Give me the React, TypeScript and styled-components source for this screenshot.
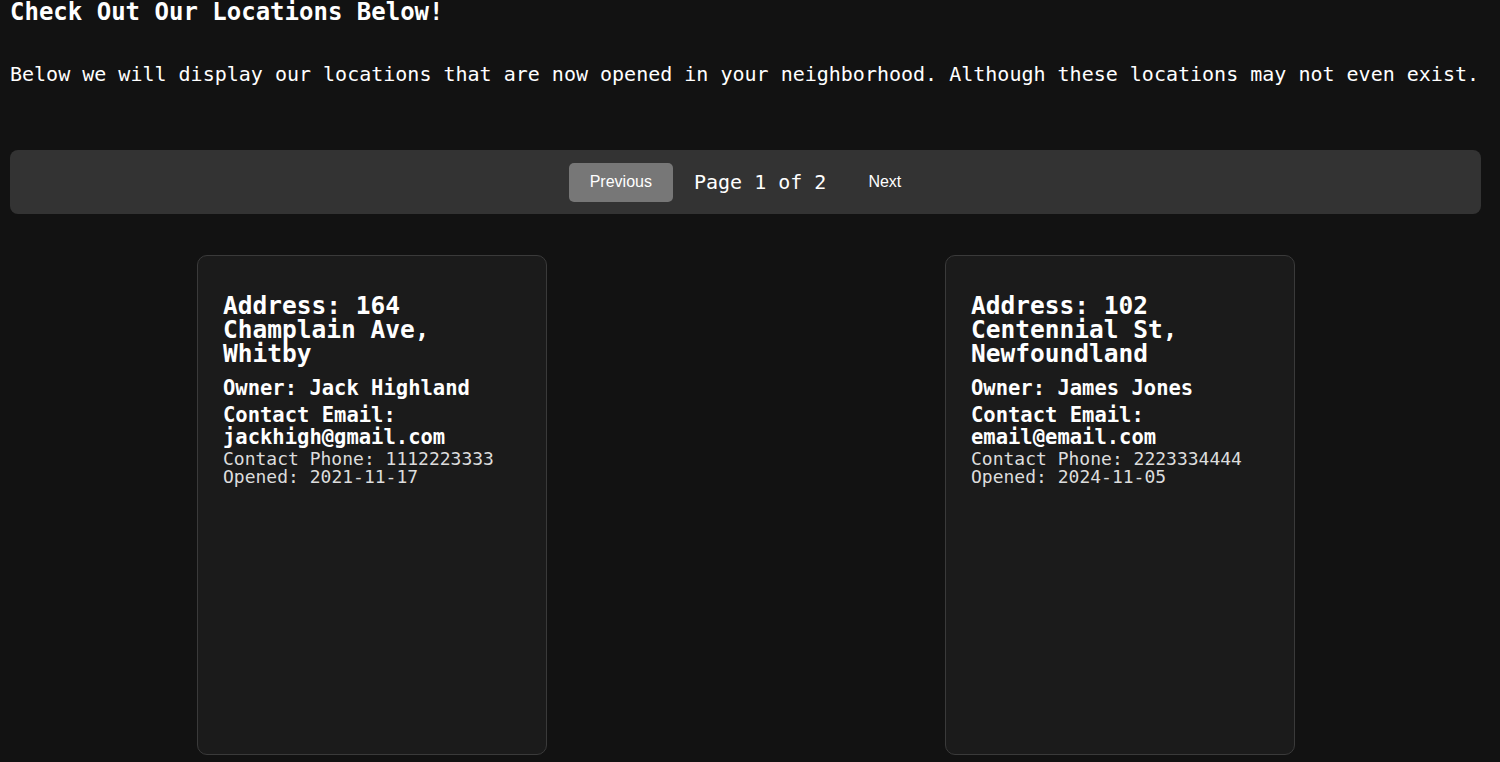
import React from "react";
import styled, { createGlobalStyle } from "styled-components";

const GlobalStyle = createGlobalStyle`
  html, body {
    margin: 0;
    padding: 0;
    background: #121212;
    color: #fff;
    font-family: "DejaVu Sans Mono", "Liberation Mono", monospace;
  }
`;

type Location = {
  address: string;
  owner: string;
  email: string;
  phone: string;
  opened: string;
};

const locations: Location[] = [
  {
    address: "164 Champlain Ave, Whitby",
    owner: "Jack Highland",
    email: "jackhigh@gmail.com",
    phone: "1112223333",
    opened: "2021-11-17",
  },
  {
    address: "102 Centennial St, Newfoundland",
    owner: "James Jones",
    email: "email@email.com",
    phone: "2223334444",
    opened: "2024-11-05",
  },
];

export default function App() {
  return (
    <>
      <GlobalStyle />
      <Page>
        <Intro>
          <Title>Check Out Our Locations Below!</Title>
          <Lead>
            Below we will display our locations that are now opened in your
            neighborhood. Although these locations may not even exist.
          </Lead>
        </Intro>

        <Pager>
          <PagerButton $active>Previous</PagerButton>
          <PageLabel>Page 1 of 2</PageLabel>
          <PagerButton>Next</PagerButton>
        </Pager>

        <CardList>
          {locations.map((loc) => (
            <Card key={loc.address}>
              <Address>Address: {loc.address}</Address>
              <Detail>Owner: {loc.owner}</Detail>
              <Detail>Contact Email: {loc.email}</Detail>
              <Meta>
                Contact Phone: {loc.phone}
                <br />
                Opened: {loc.opened}
              </Meta>
            </Card>
          ))}
        </CardList>
      </Page>
    </>
  );
}

const Page = styled.main`
  display: flex;
  flex-direction: column;
  min-height: 100vh;
`;

const Intro = styled.header`
  padding: 0 10px;
`;

const Title = styled.h1`
  margin: 0;
  font-size: 24px;
  line-height: 24px;
  font-weight: bold;
  color: #fff;
`;

const Lead = styled.p`
  margin: 38px 0 0;
  font-size: 20px;
  line-height: 24px;
  color: #fff;
  white-space: nowrap;
`;

const Pager = styled.nav`
  display: flex;
  align-items: center;
  justify-content: center;
  gap: 21px;
  margin: 64px 19px 0 10px;
  height: 64px;
  background: #333;
  border-radius: 8px;
`;

const PagerButton = styled.button<{ $active?: boolean }>`
  height: 39px;
  padding: 0 21px;
  border: none;
  border-radius: 5px;
  background: ${(p) => (p.$active ? "#777" : "transparent")};
  color: #fff;
  font-family: "Liberation Sans", Arial, sans-serif;
  font-size: 16px;
  cursor: pointer;
`;

const PageLabel = styled.span`
  font-size: 20px;
  color: #fff;
`;

const CardList = styled.section`
  display: flex;
  justify-content: space-around;
  margin: 41px 0 0 -2px;
  padding-right: 6px;
`;

const Card = styled.article`
  box-sizing: border-box;
  width: 350px;
  height: 500px;
  padding: 38px 25px;
  background: #1b1b1b;
  border: 1px solid #3a3a3a;
  border-radius: 10px;
`;

const Address = styled.h2`
  margin: 0 0 11px;
  font-size: 24.5px;
  line-height: 24px;
  font-weight: bold;
  color: #fff;
`;

const Detail = styled.h3`
  margin: 0 0 5px;
  font-size: 20.5px;
  line-height: 22px;
  font-weight: bold;
  color: #fff;
`;

const Meta = styled.p`
  margin: -3px 0 0;
  font-size: 18px;
  line-height: 18px;
  color: #ddd;
`;
